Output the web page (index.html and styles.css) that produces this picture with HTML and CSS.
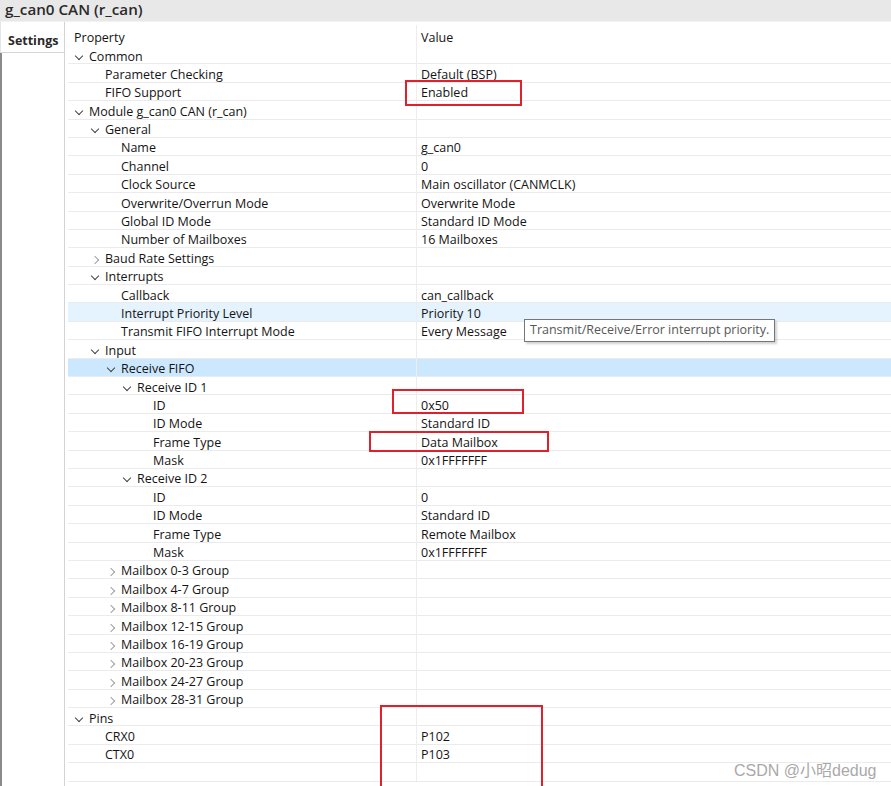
FILE: index.html
```html
<!DOCTYPE html>
<html>
<head>
<meta charset="utf-8">
<link rel="stylesheet" href="styles.css">
</head>
<body>
<div class="title">g_can0 CAN (r_can)</div>
<div class="main">
  <div class="side">
    <div class="tab">Settings</div>
    <div class="side-rest"></div>
  </div>
  <div class="table">
    <div class="head"><div class="p">Property</div><div class="v">Value</div></div>
    <div class="row"><div class="p l0"><i class="ex"></i>Common</div><div class="v"></div></div>
    <div class="row"><div class="p l1">Parameter Checking</div><div class="v">Default (BSP)</div></div>
    <div class="row"><div class="p l1">FIFO Support</div><div class="v">Enabled</div></div>
    <div class="row"><div class="p l0"><i class="ex"></i>Module g_can0 CAN (r_can)</div><div class="v"></div></div>
    <div class="row"><div class="p l1"><i class="ex"></i>General</div><div class="v"></div></div>
    <div class="row"><div class="p l2">Name</div><div class="v">g_can0</div></div>
    <div class="row"><div class="p l2">Channel</div><div class="v">0</div></div>
    <div class="row"><div class="p l2">Clock Source</div><div class="v">Main oscillator (CANMCLK)</div></div>
    <div class="row"><div class="p l2">Overwrite/Overrun Mode</div><div class="v">Overwrite Mode</div></div>
    <div class="row"><div class="p l2">Global ID Mode</div><div class="v">Standard ID Mode</div></div>
    <div class="row"><div class="p l2">Number of Mailboxes</div><div class="v">16 Mailboxes</div></div>
    <div class="row"><div class="p l1"><i class="co"></i>Baud Rate Settings</div><div class="v"></div></div>
    <div class="row"><div class="p l1"><i class="ex"></i>Interrupts</div><div class="v"></div></div>
    <div class="row"><div class="p l2">Callback</div><div class="v">can_callback</div></div>
    <div class="row hover"><div class="p l2">Interrupt Priority Level</div><div class="v">Priority 10</div></div>
    <div class="row"><div class="p l2">Transmit FIFO Interrupt Mode</div><div class="v">Every Message</div></div>
    <div class="row"><div class="p l1"><i class="ex"></i>Input</div><div class="v"></div></div>
    <div class="row sel"><div class="p l2"><i class="ex"></i>Receive FIFO</div><div class="v"></div></div>
    <div class="row"><div class="p l3"><i class="ex"></i>Receive ID 1</div><div class="v"></div></div>
    <div class="row"><div class="p l4">ID</div><div class="v">0x50</div></div>
    <div class="row"><div class="p l4">ID Mode</div><div class="v">Standard ID</div></div>
    <div class="row"><div class="p l4">Frame Type</div><div class="v">Data Mailbox</div></div>
    <div class="row"><div class="p l4">Mask</div><div class="v">0x1FFFFFFF</div></div>
    <div class="row"><div class="p l3"><i class="ex"></i>Receive ID 2</div><div class="v"></div></div>
    <div class="row"><div class="p l4">ID</div><div class="v">0</div></div>
    <div class="row"><div class="p l4">ID Mode</div><div class="v">Standard ID</div></div>
    <div class="row"><div class="p l4">Frame Type</div><div class="v">Remote Mailbox</div></div>
    <div class="row"><div class="p l4">Mask</div><div class="v">0x1FFFFFFF</div></div>
    <div class="row"><div class="p l2"><i class="co"></i>Mailbox 0-3 Group</div><div class="v"></div></div>
    <div class="row"><div class="p l2"><i class="co"></i>Mailbox 4-7 Group</div><div class="v"></div></div>
    <div class="row"><div class="p l2"><i class="co"></i>Mailbox 8-11 Group</div><div class="v"></div></div>
    <div class="row"><div class="p l2"><i class="co"></i>Mailbox 12-15 Group</div><div class="v"></div></div>
    <div class="row"><div class="p l2"><i class="co"></i>Mailbox 16-19 Group</div><div class="v"></div></div>
    <div class="row"><div class="p l2"><i class="co"></i>Mailbox 20-23 Group</div><div class="v"></div></div>
    <div class="row"><div class="p l2"><i class="co"></i>Mailbox 24-27 Group</div><div class="v"></div></div>
    <div class="row"><div class="p l2"><i class="co"></i>Mailbox 28-31 Group</div><div class="v"></div></div>
    <div class="row"><div class="p l0"><i class="ex"></i>Pins</div><div class="v"></div></div>
    <div class="row"><div class="p l1">CRX0</div><div class="v">P102</div></div>
    <div class="row"><div class="p l1">CTX0</div><div class="v">P103</div></div>
    <div class="row"><div class="p l1"></div><div class="v"></div></div>
  </div>
</div>

<div class="mark m1"></div>
<div class="mark m2"></div>
<div class="mark m3"></div>
<div class="mark m4"></div>
<div class="tooltip">Transmit/Receive/Error interrupt priority.</div>
<div class="watermark">CSDN @小昭dedug</div>
</body>
</html>
```

FILE: styles.css
```css
* { box-sizing: border-box; }
html, body { margin: 0; padding: 0; }
body {
  width: 891px;
  height: 786px;
  overflow: hidden;
  background: #fff;
  font-family: "Open Sans", "Noto Sans", sans-serif;
  font-size: 12.5px;
  color: #141414;
  position: relative;
}
.title {
  height: 22px;
  background: #e8e8e8;
  border-bottom: 1px solid #f2f2f2;
  padding-left: 5px;
  font-size: 15.2px;
  font-weight: 600;
  line-height: 18px;
  color: #2a2a2a;
}
.main {
  display: flex;
  height: 764px;
}
.side {
  width: 65px;
  display: flex;
  flex-direction: column;
  border-right: 1px solid #d4d4d4;
}
.tab {
  height: 31px;
  padding-left: 7px;
  padding-top: 10px;
  font-weight: 700;
  font-size: 12.5px;
  color: #2a2a2a;
  border-left: 1px solid #e6e6e6;
  border-bottom: 1px solid #d6d6d6;
}
.side-rest {
  flex: 1;
  border-left: 2px solid #8a8a8a;
}
.table {
  flex: 1;
  padding-left: 3px;
  display: flex;
  flex-direction: column;
}
.head {
  height: 24px;
  display: grid;
  grid-template-columns: 348px 1fr;
}
.head .p { padding-left: 6px; padding-top: 7px; }
.head .v { padding-left: 4px; border-left: 1px solid #ededed; margin-top: 3px; padding-top: 4px; }
.row {
  height: 18.4px;
  display: grid;
  grid-template-columns: 348px 1fr;
  border-bottom: 1px solid #ebebeb;
  line-height: 17px;
  white-space: nowrap;
}
.row > div { padding-top: 1.5px; }
.row .v {
  padding-left: 4px;
  border-left: 1px solid #ededed;
}
.row.hover { background: #e5f3ff; }
.row.sel { background: #cce8ff; }
.p { position: relative; }
.l0 { padding-left: 21px; }
.l1 { padding-left: 37px; }
.l2 { padding-left: 53px; }
.l3 { padding-left: 69px; }
.l4 { padding-left: 85px; }
.p i {
  display: inline-block;
  width: 6px;
  height: 6px;
  border-right: 1.3px solid #444;
  border-bottom: 1.3px solid #444;
  margin-left: -13px;
  margin-right: 7px;
  vertical-align: 0;
}
.p i.ex {
  transform: rotate(45deg);
  position: relative;
  top: -2px;
}
.p i.co {
  border-color: #a0a0a0;
  transform: rotate(-45deg);
  position: relative;
  top: 0;
}
.mark {
  position: absolute;
  border: 2px solid #e0202a;
}
.m1 { left: 405px; top: 80px; width: 117px; height: 26px; }
.m2 { left: 392px; top: 389px; width: 132px; height: 25px; }
.m3 { left: 369px; top: 431px; width: 180px; height: 21px; }
.m4 { left: 380px; top: 705px; width: 163px; height: 90px; }
.tooltip {
  position: absolute;
  left: 524px;
  top: 319px;
  height: 23px;
  padding: 0 5px;
  border: 1px solid #767676;
  background: #fff;
  color: #575757;
  font-size: 12.5px;
  line-height: 20px;
  box-shadow: 2px 2px 2px rgba(0,0,0,0.18);
  white-space: nowrap;
}
.watermark {
  position: absolute;
  left: 734px;
  top: 757px;
  font-family: "Liberation Sans", "Noto Sans CJK SC", sans-serif;
  font-size: 16px;
  color: #a9a9a9;
  white-space: nowrap;
}
```
